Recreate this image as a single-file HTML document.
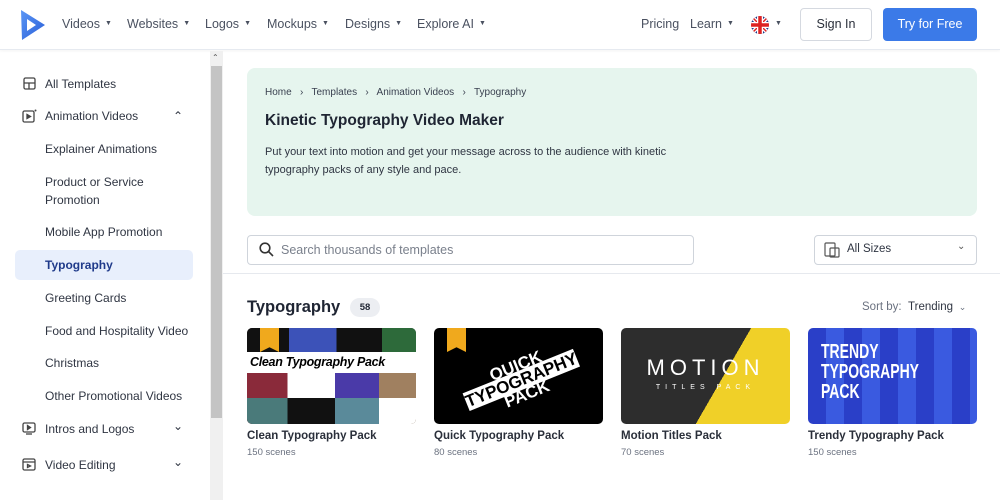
<!DOCTYPE html>
<html><head><meta charset="utf-8"><style>
*{box-sizing:border-box;margin:0;padding:0}
body{width:1000px;height:500px;overflow:hidden;font-family:"Liberation Sans",sans-serif;background:#fff;color:#1f2533;position:relative}
.top{position:absolute;left:0;top:0;width:1000px;height:50px;border-bottom:1px solid #e6eaf0;box-shadow:0 1px 3px rgba(0,0,0,.05);background:#fff}
.nav{position:absolute;top:17px;font-size:12.5px;color:#4a5160}
.nav span{position:absolute;white-space:nowrap}
.nav span.car,.car{position:static;display:inline-block;font-size:7px;margin-left:5px;vertical-align:middle;position:relative;top:-1px}
.btn1{position:absolute;left:800px;top:8px;width:72px;height:33px;border:1px solid #d5d9e0;border-radius:4px;font-size:12.5px;text-align:center;line-height:31px;color:#2a2f3a}
.btn2{position:absolute;left:883px;top:8px;width:94px;height:33px;background:#3b7ae8;border-radius:4px;font-size:12.5px;text-align:center;line-height:33px;color:#fff}
.side{position:absolute;left:0;top:51px;width:210px;height:449px}
.side div{position:absolute;left:45px;font-size:12px;color:#2f3542;white-space:nowrap}
.scroll{position:absolute;left:210px;top:51px;width:13px;height:449px;background:#f0f0f0}
.thumb{position:absolute;left:211px;top:66px;width:11px;height:352px;background:#c4c4c4}
.hero{position:absolute;left:247px;top:68px;width:730px;height:148px;background:#e6f5ee;border-radius:8px}
.card{position:absolute;top:328px;width:169px;height:96px;border-radius:5px;overflow:hidden}
.ct{position:absolute;top:430px;font-size:11.5px;font-weight:bold;color:#2a2f3a}
.cs{position:absolute;top:447px;font-size:9.5px;color:#6b7280}
.badge{position:absolute;left:13px;top:0;width:19px;height:24px;background:#f0a91d;clip-path:polygon(0 0,100% 0,100% 100%,50% 80%,0 100%)}
</style></head><body>
<div class="top">
<svg style="position:absolute;left:20px;top:9px" width="26" height="32" viewBox="0 0 26 32"><defs><linearGradient id="g" x1="0" y1="0" x2="1" y2="1"><stop offset="0" stop-color="#5a96f5"/><stop offset="1" stop-color="#2a5fd8"/></linearGradient></defs><path fill-rule="evenodd" fill="url(#g)" d="M1 1 L25 16 L2 31 Z M7 10 L16 16 L7 22 Z"/></svg>
<div class="nav">
<span style="left:62px">Videos<span class="car">▼</span></span>
<span style="left:127px">Websites<span class="car">▼</span></span>
<span style="left:205px">Logos<span class="car">▼</span></span>
<span style="left:267px">Mockups<span class="car">▼</span></span>
<span style="left:345px">Designs<span class="car">▼</span></span>
<span style="left:417px">Explore AI<span class="car">▼</span></span>
<span style="left:641px">Pricing</span>
<span style="left:690px">Learn<span class="car">▼</span></span>
<span style="left:770px"><span class="car">▼</span></span>
</div>
<svg style="position:absolute;left:750px;top:15px" width="20" height="20" viewBox="0 0 20 20"><clipPath id="c"><circle cx="10" cy="10" r="9"/></clipPath><g clip-path="url(#c)"><rect width="20" height="20" fill="#1f3a8a"/><path d="M0 0L20 20M20 0L0 20" stroke="#fff" stroke-width="4"/><path d="M0 0L20 20M20 0L0 20" stroke="#d22" stroke-width="1.5"/><path d="M10 0V20M0 10H20" stroke="#fff" stroke-width="6"/><path d="M10 0V20M0 10H20" stroke="#d22" stroke-width="3.5"/></g></svg>
<div class="btn1">Sign In</div><div class="btn2">Try for Free</div>
</div>
<div class="side">
<svg style="position:absolute;left:23px;top:26px" width="13" height="13" viewBox="0 0 13 13" fill="none" stroke="#444" stroke-width="1.3"><rect x="1" y="1" width="11" height="11" rx="1.5"/><path d="M1 6H12M6 6V12"/></svg>
<div style="top:26px">All Templates</div>
<svg style="position:absolute;left:22px;top:58px" width="15" height="14" viewBox="0 0 15 14" fill="none" stroke="#444" stroke-width="1.3"><rect x="1" y="2" width="11" height="11" rx="1.5"/><path d="M5 5.5L8.5 7.5L5 9.5Z" fill="#444"/><circle cx="13.5" cy="1.5" r="1" fill="#444" stroke="none"/></svg>
<div style="top:58px">Animation Videos</div>
<div style="left:173px;top:58px">⌃</div>
<div style="top:91px">Explainer Animations</div>
<div style="top:124px">Product or Service</div>
<div style="top:142px">Promotion</div>
<div style="top:174px">Mobile App Promotion</div>
<div style="left:15px;top:199px;width:178px;height:30px;background:#e8effc;border-radius:5px"></div>
<div style="top:207px;font-weight:bold;color:#1f3a8a">Typography</div>
<div style="top:240px">Greeting Cards</div>
<div style="top:273px">Food and Hospitality Video</div>
<div style="top:305px">Christmas</div>
<div style="top:338px">Other Promotional Videos</div>
<svg style="position:absolute;left:22px;top:371px" width="14" height="13" viewBox="0 0 14 13" fill="none" stroke="#444" stroke-width="1.3"><rect x="1" y="1" width="12" height="9" rx="1.5"/><path d="M5.5 3.5L8.5 5.5L5.5 7.5Z" fill="#444"/><path d="M4 12H10"/></svg>
<div style="top:371px">Intros and Logos</div>
<div style="left:173px;top:368px">⌄</div>
<svg style="position:absolute;left:22px;top:407px" width="14" height="13" viewBox="0 0 14 13" fill="none" stroke="#444" stroke-width="1.3"><rect x="1" y="1" width="12" height="11" rx="1.5"/><path d="M1 4H13M5.5 6.5L8.5 8L5.5 9.5Z"/></svg>
<div style="top:407px">Video Editing</div>
<div style="left:173px;top:404px">⌄</div>
</div>
<div class="scroll"></div><div class="thumb"></div>
<div style="position:absolute;left:212px;top:53px;font-size:8px;color:#555">⌃</div>
<div class="hero">
<div style="position:absolute;left:18px;top:19px;font-size:10px;color:#3a4150">Home &nbsp;&nbsp;›&nbsp;&nbsp; Templates &nbsp;&nbsp;›&nbsp;&nbsp; Animation Videos &nbsp;&nbsp;›&nbsp;&nbsp; Typography</div>
<div style="position:absolute;left:18px;top:44px;font-size:15.5px;font-weight:bold;color:#1f2533">Kinetic Typography Video Maker</div>
<div style="position:absolute;left:18px;top:75px;width:450px;font-size:11px;line-height:18px;color:#2f3542">Put your text into motion and get your message across to the audience with kinetic typography packs of any style and pace.</div>
</div>
<div style="position:absolute;left:247px;top:235px;width:447px;height:30px;border:1px solid #cfd4db;border-radius:4px"></div>
<svg style="position:absolute;left:259px;top:242px" width="15" height="15" viewBox="0 0 15 15" fill="none" stroke="#333" stroke-width="1.6"><circle cx="6" cy="6" r="4.8"/><path d="M9.5 9.5L14 14"/></svg>
<div style="position:absolute;left:281px;top:243px;font-size:12.5px;color:#7a808c">Search thousands of templates</div>
<div style="position:absolute;left:814px;top:235px;width:163px;height:30px;border:1px solid #cfd4db;border-radius:4px"></div>
<svg style="position:absolute;left:824px;top:242px" width="16" height="16" viewBox="0 0 16 16" fill="none" stroke="#555" stroke-width="1.2"><rect x="1" y="1" width="10" height="13" rx="1"/><rect x="6" y="6" width="9" height="9" rx="1"/></svg>
<div style="position:absolute;left:847px;top:243px;font-size:11.5px;color:#2f3542">All Sizes</div>
<div style="position:absolute;left:957px;top:241px;font-size:10px;color:#555">⌄</div>
<div style="position:absolute;left:223px;top:273px;width:777px;height:1px;background:#e6e9ee"></div>
<div style="position:absolute;left:247px;top:298px;font-size:16.5px;font-weight:bold;color:#1f2533">Typography</div>
<div style="position:absolute;left:350px;top:298px;width:30px;height:19px;border-radius:10px;background:#eceef2;font-size:9.5px;text-align:center;line-height:19px;font-weight:bold">58</div>
<div style="position:absolute;left:862px;top:301px;font-size:11.5px;color:#6b7280">Sort by: <span style="color:#2f3542">&nbsp;Trending</span> <span style="font-size:9px">&nbsp;⌄</span></div>

<div class="card" style="left:247px;background:#222">
<div style="position:absolute;left:0;top:0;width:169px;height:24px;background:linear-gradient(90deg,#111 0 25%,#3c52b8 25% 53%,#111 53% 80%,#2d6a3a 80%)"></div>
<div style="position:absolute;left:0;top:24px;width:169px;height:21px;background:#fff;font-size:12.5px;font-weight:bold;font-style:italic;line-height:21px;padding-left:3px;color:#000;letter-spacing:-.3px">Clean Typography Pack</div>
<div style="position:absolute;left:0;top:45px;width:169px;height:51px;background:linear-gradient(90deg,#8a2a3a 0 24%,#fff 24% 52%,#4a3aa8 52% 78%,#a08060 78%)"></div>
<div style="position:absolute;left:0;top:70px;width:169px;height:26px;background:linear-gradient(90deg,#4a7a7a 0 24%,#111 24% 52%,#5a8a9a 52% 78%,#fff 78%)"></div>
<div class="badge"></div></div>
<div class="card" style="left:434px;background:#000">
<div style="position:absolute;left:22px;top:30px;width:125px;height:30px;color:#fff;font-weight:bold;font-size:17px;line-height:15px;transform:rotate(-22deg);text-align:center">QUICK<br><span style="background:#fff;color:#000">TYPOGRAPHY</span><br>PACK</div>
<div class="badge"></div></div>
<div class="card" style="left:621px;background:linear-gradient(120deg,#2d2d2d 0 58%,#f0d028 58%)">
<div style="position:absolute;left:0;top:27px;width:169px;text-align:center;color:#fff;font-size:22px;letter-spacing:5px">MOTION</div>
<div style="position:absolute;left:0;top:56px;width:169px;text-align:center;color:#fff;font-size:7px;letter-spacing:5px">TITLES PACK</div></div>
<div class="card" style="left:808px;background:repeating-linear-gradient(90deg,#2a3fc8 0 18px,#3a5ae0 18px 36px)">
<div style="position:absolute;left:13px;top:14px;color:#fff;font-weight:bold;font-size:20px;line-height:20px;transform:scaleX(.7);transform-origin:left">TRENDY<br>TYPOGRAPHY<br>PACK</div></div>
<div class="ct" style="left:247px">Clean Typography Pack</div><div class="cs" style="left:247px">150 scenes</div>
<div class="ct" style="left:434px">Quick Typography Pack</div><div class="cs" style="left:434px">80 scenes</div>
<div class="ct" style="left:621px">Motion Titles Pack</div><div class="cs" style="left:621px">70 scenes</div>
<div class="ct" style="left:808px">Trendy Typography Pack</div><div class="cs" style="left:808px">150 scenes</div>
</body></html>
